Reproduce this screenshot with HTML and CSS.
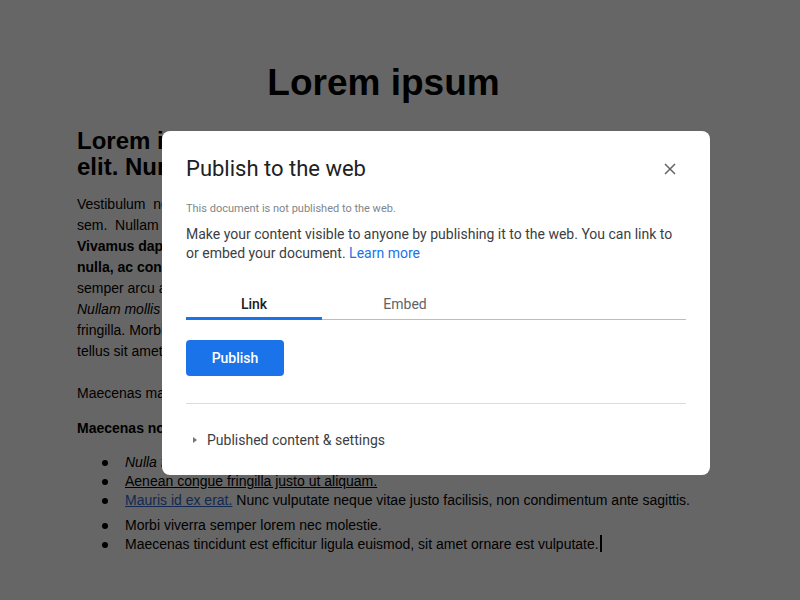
FILE: index.html
```html
<!DOCTYPE html>
<html lang="en">
<head>
<meta charset="utf-8">
<title>Publish to the web</title>
<link rel="stylesheet" href="styles.css">
</head>
<body>
<main class="doc">
  <h1 class="doc-title">Lorem ipsum</h1>
  <h2 class="doc-sub">Lorem ipsum dolor sit amet, consectetur adipiscing elit. Nunc quis libero ut est.</h2>
  <p class="doc-p">Vestibulum &nbsp;neque massa, scelerisque sit amet ligula eu, congue molestie mi. Praesent ut varius<br>sem. &nbsp;Nullam at porttitor arcu, nec lacinia nisi. Ut ac dolor vitae odio interdum condimentum.<br><b>Vivamus dapibus sodales ex, vitae malesuada ipsum cursus convallis. Maecenas sed<br>nulla, ac condimentum orci.</b> Mauris diam felis, vulputate ac suscipit et, iaculis.<br>semper arcu ac ligula semper, nec luctus nisl blandit. Integer lacinia ante ac libero.<br><i>Nullam mollis convallis ipsum, ac accumsan nunc vehicula vitae.</i> Nulla eget justo in<br>fringilla. Morbi sit amet tortor quis risus auctor condimentum. Morbi in ullamcorper.<br>tellus sit amet mauris tempus fringilla.</p>
  <p class="doc-p doc-p-gap">Maecenas mauris lectus, lobortis et purus mattis, blandit dictum tellus.</p>
  <p class="doc-p"><b>Maecenas non lorem quis tellus placerat varius.</b></p>
  <ul class="doc-list">
    <li><i>Nulla facilisi. Curabitur vitae iaculis elit.</i></li>
    <li><u>Aenean congue fringilla justo ut aliquam.</u></li>
    <li><a class="doc-link" href="#">Mauris id ex erat.</a> Nunc vulputate neque vitae justo facilisis, non condimentum ante sagittis.</li>
  </ul>
  <ul class="doc-list doc-list-2">
    <li>Morbi viverra semper lorem nec molestie.</li>
    <li>Maecenas tincidunt est efficitur ligula euismod, sit amet ornare est vulputate.<span class="caret"></span></li>
  </ul>
</main>

<div class="scrim"></div>

<section class="dialog" role="dialog" aria-labelledby="dlg-title">
  <header class="dlg-head">
    <h3 id="dlg-title" class="dlg-title">Publish to the web</h3>
    <button class="dlg-close" aria-label="Close">
      <svg width="12" height="12" viewBox="0 0 12 12"><path d="M1 1L11 11M11 1L1 11" stroke="#5f6368" stroke-width="1.5" fill="none"/></svg>
    </button>
  </header>
  <p class="dlg-status">This document is not published to the web.</p>
  <p class="dlg-desc">Make your content visible to anyone by publishing it to the web. You can link to or embed your document. <a class="dlg-learn" href="#">Learn more</a></p>
  <div class="dlg-tabs">
    <div class="dlg-tab is-active">Link</div>
    <div class="dlg-tab dlg-tab-wide">Embed</div>
  </div>
  <div class="dlg-actions">
    <button class="dlg-publish">Publish</button>
  </div>
  <hr class="dlg-rule">
  <div class="dlg-more">
    <span class="dlg-arrow"></span>
    <span>Published content &amp; settings</span>
  </div>
</section>
</body>
</html>
```
FILE: styles.css
```css
html, body {
  margin: 0;
  padding: 0;
  background: #ffffff;
}
body {
  width: 800px;
  height: 600px;
  overflow: hidden;
  font-family: "Liberation Sans", Arial, sans-serif;
  color: #000;
}
.doc {
  width: 613px;
  margin-left: 77px;
  padding-top: 62px;
}
.doc-title {
  margin: 0;
  font-size: 37px;
  line-height: 42px;
  text-align: center;
  font-weight: bold;
}
.doc-sub {
  margin: 24px 0 0;
  font-size: 24px;
  line-height: 26px;
  font-weight: bold;
}
.doc-p {
  margin: 14px 0 0;
  font-size: 14px;
  line-height: 21px;
  white-space: nowrap;
}
.doc-p-gap {
  margin-top: 21px;
}
.doc-list {
  margin: 14px 0 0;
  padding-left: 48px;
  list-style: none;
  font-size: 14px;
  line-height: 19px;
}
.doc-list li::before {
  content: "";
  display: inline-block;
  width: 6px;
  height: 6px;
  border-radius: 50%;
  background: #000;
  margin-left: -23px;
  margin-right: 17px;
  vertical-align: 1px;
}
.doc-list-2 {
  margin-top: 6px;
}
.doc-link {
  color: #3366cc;
}
.caret {
  display: inline-block;
  width: 2px;
  height: 17px;
  background: #000;
  vertical-align: -3px;
  margin-left: 1px;
}
.scrim {
  position: fixed;
  inset: 0;
  background: rgba(0, 0, 0, 0.6);
}
.dialog {
  position: absolute;
  left: 162px;
  top: 131px;
  width: 548px;
  height: 344px;
  box-sizing: border-box;
  padding: 24px 24px 0;
  background: #fff;
  border-radius: 8px;
  font-family: Roboto, "Liberation Sans", Arial, sans-serif;
  color: #3c4043;
}
.dlg-head {
  display: flex;
  align-items: center;
  justify-content: space-between;
  height: 28px;
}
.dlg-title {
  margin: 0;
  font-size: 22px;
  line-height: 28px;
  font-weight: 400;
  color: #202124;
}
.dlg-close {
  width: 24px;
  height: 24px;
  margin-right: 4px;
  padding: 0;
  border: 0;
  background: none;
  display: flex;
  align-items: center;
  justify-content: center;
}
.dlg-status {
  margin: 18px 0 0;
  font-size: 11px;
  line-height: 16px;
  color: #80868b;
}
.dlg-desc {
  margin: 8px 0 0;
  font-size: 14px;
  line-height: 19px;
  color: #3c4043;
}
.dlg-learn {
  color: #1a73e8;
  text-decoration: none;
}
.dlg-tabs {
  display: flex;
  margin-top: 23px;
  border-bottom: 1px solid #bdbdbd;
}
.dlg-tab {
  width: 136px;
  box-sizing: border-box;
  padding-top: 8px;
  padding-bottom: 3px;
  margin-bottom: -1px;
  border-bottom: 3px solid transparent;
  text-align: center;
  font-size: 14px;
  line-height: 20px;
  font-weight: 400;
  color: #5f6368;
}
.dlg-tab-wide {
  width: 166px;
}
.dlg-tab.is-active {
  color: #202124;
  font-weight: 500;
  border-bottom-color: #1a73e8;
}
.dlg-actions {
  margin-top: 20px;
  display: flex;
}
.dlg-publish {
  width: 98px;
  height: 36px;
  border: 0;
  border-radius: 4px;
  background: #1a73e8;
  color: #fff;
  font-family: Roboto, "Liberation Sans", Arial, sans-serif;
  font-size: 14px;
  font-weight: 500;
  padding: 0;
}
.dlg-rule {
  margin: 27px 0 0;
  border: 0;
  border-top: 1px solid #dadce0;
  height: 0;
}
.dlg-more {
  margin-top: 26px;
  display: flex;
  align-items: center;
  gap: 10px;
  padding-left: 7px;
  font-size: 14px;
  line-height: 20px;
  color: #3c4043;
}
.dlg-arrow {
  width: 0;
  height: 0;
  border-top: 3px solid transparent;
  border-bottom: 3px solid transparent;
  border-left: 4px solid #757575;
}
```
